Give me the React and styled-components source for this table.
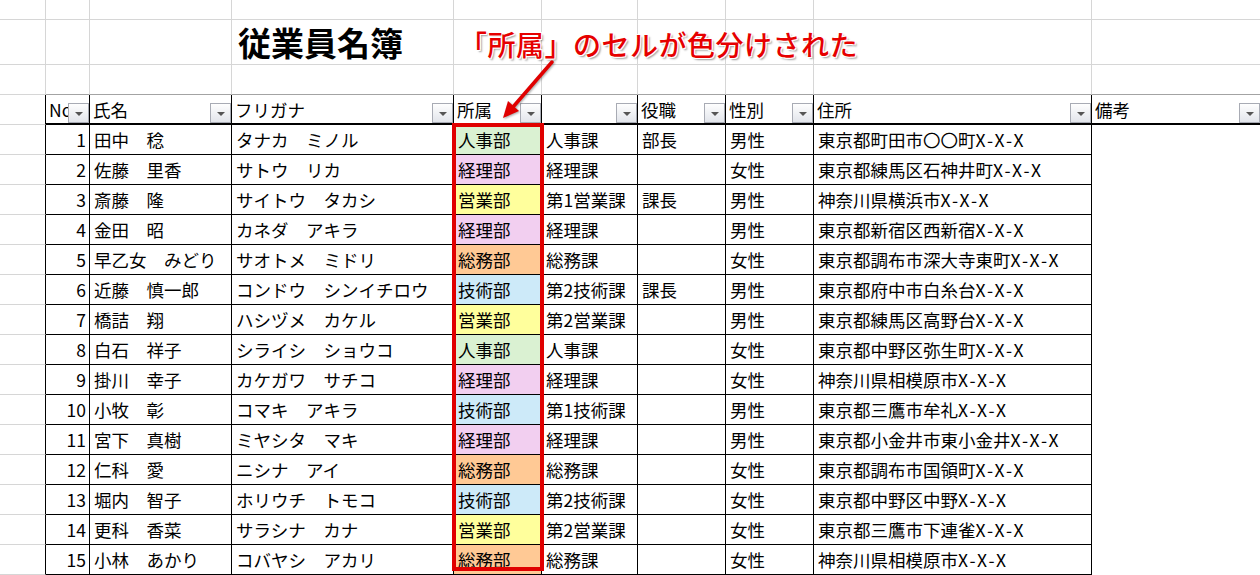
import React from "react";
import styled, { createGlobalStyle } from "styled-components";

const LIGHT = "#d6d6d6";
const MID = "#a3a3a3";
const BLACK = "#000";

const GlobalStyle = createGlobalStyle`
  html, body {
    margin: 0;
    padding: 0;
    background: #fff;
  }
  body {
    font-family: "Noto Sans CJK JP", "Noto Sans", sans-serif;
    color: #000;
    overflow: hidden;
  }
`;

const Sheet = styled.div`
  position: relative;
  width: 1260px;
  height: 575px;
  overflow: hidden;
  background: #fff;
`;

const Row = styled.div`
  display: grid;
  grid-template-columns: 46px 44px 142px 222px 88px 96px 88px 88px 278px 1fr;
  height: ${(p) => p.$h}px;
`;

const Cell = styled.div`
  box-sizing: border-box;
  display: flex;
  align-items: center;
  justify-content: ${(p) => (p.$align === "right" ? "flex-end" : "flex-start")};
  padding: 1px ${(p) => (p.$align === "right" ? "3px" : "0")} 0 ${(p) => (p.$align === "right" ? "0" : "4px")};
  border-right: ${(p) => (p.$r ? `1px solid ${p.$r}` : "none")};
  border-bottom: ${(p) => (p.$b ? `${p.$bw || 1}px solid ${p.$b}` : "none")};
  background: ${(p) => p.$bg || "transparent"};
  font-size: 17.5px;
  line-height: 1;
  white-space: nowrap;
  overflow: ${(p) => (p.$spill ? "visible" : "hidden")};
`;

const HeadCell = styled(Cell)`
  align-items: stretch;
  padding: 0 0 0 3px;
`;

const HeadLabel = styled.span`
  flex: 1;
  min-width: 0;
  overflow: hidden;
  display: flex;
  align-items: center;
  padding-top: 1px;
`;

const FilterButton = styled.span`
  align-self: flex-end;
  flex: none;
  box-sizing: border-box;
  width: 21px;
  height: 20px;
  border: 1px solid #a8abb4;
  background: linear-gradient(#fefefe, #e2e5eb);
  display: grid;
  place-items: center;
  &::after {
    content: "";
    width: 0;
    height: 0;
    border-left: 4px solid transparent;
    border-right: 4px solid transparent;
    border-top: 4px solid #555;
    margin-top: 1px;
  }
`;

const Title = styled.span`
  padding-left: 2px;
  font-size: 33px;
  line-height: 1.2;
  font-weight: 700;
`;

const AddrTail = styled.span`
  letter-spacing: 2px;
`;

const Callout = styled.div`
  position: absolute;
  left: 459px;
  top: 29px;
  font-size: 28px;
  line-height: 1.1;
  font-weight: 500;
  letter-spacing: 0.5px;
  color: #e60000;
  white-space: nowrap;
  text-shadow:
    -1px -1px 0 #fff,
    1px -1px 0 #fff,
    -1px 1px 0 #fff,
    1px 1px 0 #fff,
    2px 2px 2px rgba(0, 0, 0, 0.4);
`;

const Arrow = styled.svg`
  position: absolute;
  left: 495px;
  top: 55px;
  overflow: visible;
  filter: drop-shadow(1px 1px 1px rgba(0, 0, 0, 0.35));
`;

const Highlight = styled.div`
  position: absolute;
  left: 452px;
  top: 123px;
  width: 92px;
  height: 448px;
  box-sizing: border-box;
  border: 4px solid #e00000;
  pointer-events: none;
`;

const DEPT_BG = {
  人事部: "#daf1d2",
  経理部: "#f2cff0",
  営業部: "#ffff9c",
  総務部: "#ffc995",
  技術部: "#cdeaf9",
};

const headers = ["No", "氏名", "フリガナ", "所属", "", "役職", "性別", "住所", "備考"];

const staff = [
  [1, "田中　稔", "タナカ　ミノル", "人事部", "人事課", "部長", "男性", "東京都町田市〇〇町"],
  [2, "佐藤　里香", "サトウ　リカ", "経理部", "経理課", "", "女性", "東京都練馬区石神井町"],
  [3, "斎藤　隆", "サイトウ　タカシ", "営業部", "第1営業課", "課長", "男性", "神奈川県横浜市"],
  [4, "金田　昭", "カネダ　アキラ", "経理部", "経理課", "", "男性", "東京都新宿区西新宿"],
  [5, "早乙女　みどり", "サオトメ　ミドリ", "総務部", "総務課", "", "女性", "東京都調布市深大寺東町"],
  [6, "近藤　慎一郎", "コンドウ　シンイチロウ", "技術部", "第2技術課", "課長", "男性", "東京都府中市白糸台"],
  [7, "橋詰　翔", "ハシヅメ　カケル", "営業部", "第2営業課", "", "男性", "東京都練馬区高野台"],
  [8, "白石　祥子", "シライシ　ショウコ", "人事部", "人事課", "", "女性", "東京都中野区弥生町"],
  [9, "掛川　幸子", "カケガワ　サチコ", "経理部", "経理課", "", "女性", "神奈川県相模原市"],
  [10, "小牧　彰", "コマキ　アキラ", "技術部", "第1技術課", "", "男性", "東京都三鷹市牟礼"],
  [11, "宮下　真樹", "ミヤシタ　マキ", "経理部", "経理課", "", "男性", "東京都小金井市東小金井"],
  [12, "仁科　愛", "ニシナ　アイ", "総務部", "総務課", "", "女性", "東京都調布市国領町"],
  [13, "堀内　智子", "ホリウチ　トモコ", "技術部", "第2技術課", "", "女性", "東京都中野区中野"],
  [14, "更科　香菜", "サラシナ　カナ", "営業部", "第2営業課", "", "女性", "東京都三鷹市下連雀"],
  [15, "小林　あかり", "コバヤシ　アカリ", "総務部", "総務課", "", "女性", "神奈川県相模原市"],
];

// plain sheet row above the table: light gridlines only
const BlankRow = ({ h, bottom, children }) => (
  <Row $h={h}>
    <Cell $r={LIGHT} $b={LIGHT} />
    {Array.from({ length: 9 }).map((_, i) => (
      <Cell key={i} $r={i < 8 ? LIGHT : null} $b={bottom || LIGHT} $spill>
        {children && children[i]}
      </Cell>
    ))}
  </Row>
);

const App = () => {
  return (
    <>
      <GlobalStyle />
      <Sheet>
        <BlankRow h={20} />
        <BlankRow h={45}>{[null, null, <Title key="t">従業員名簿</Title>]}</BlankRow>
        <BlankRow h={30} bottom={MID} />

        <Row $h={30}>
          <Cell $r={BLACK} $b={LIGHT} />
          {headers.map((h, i) => (
            <HeadCell key={i} $r={i < 8 ? BLACK : null} $b={BLACK} $bw={2}>
              <HeadLabel>{h}</HeadLabel>
              <FilterButton />
            </HeadCell>
          ))}
        </Row>

        {staff.map((s) => (
          <Row $h={30} key={s[0]}>
            <Cell $r={BLACK} $b={LIGHT} />
            <Cell $r={BLACK} $b={BLACK} $align="right">{s[0]}</Cell>
            <Cell $r={BLACK} $b={BLACK}>{s[1]}</Cell>
            <Cell $r={BLACK} $b={BLACK}>{s[2]}</Cell>
            <Cell $r={BLACK} $b={BLACK} $bg={DEPT_BG[s[3]]}>{s[3]}</Cell>
            <Cell $r={BLACK} $b={BLACK}>{s[4]}</Cell>
            <Cell $r={BLACK} $b={BLACK}>{s[5]}</Cell>
            <Cell $r={BLACK} $b={BLACK}>{s[6]}</Cell>
            <Cell $r={BLACK} $b={BLACK}>
              {s[7]}
              <AddrTail>X-X-X</AddrTail>
            </Cell>
            <Cell />
          </Row>
        ))}

        <Highlight />
        <Callout>「所属」のセルが色分けされた</Callout>
        <Arrow width="65" height="70" viewBox="0 0 65 70">
          <line x1="57" y1="7" x2="18" y2="52" stroke="#e00000" strokeWidth="3.5" strokeLinecap="round" />
          <polygon points="8,63 24,56 13,46" fill="#e00000" />
        </Arrow>
      </Sheet>
    </>
  );
};

export default App;
